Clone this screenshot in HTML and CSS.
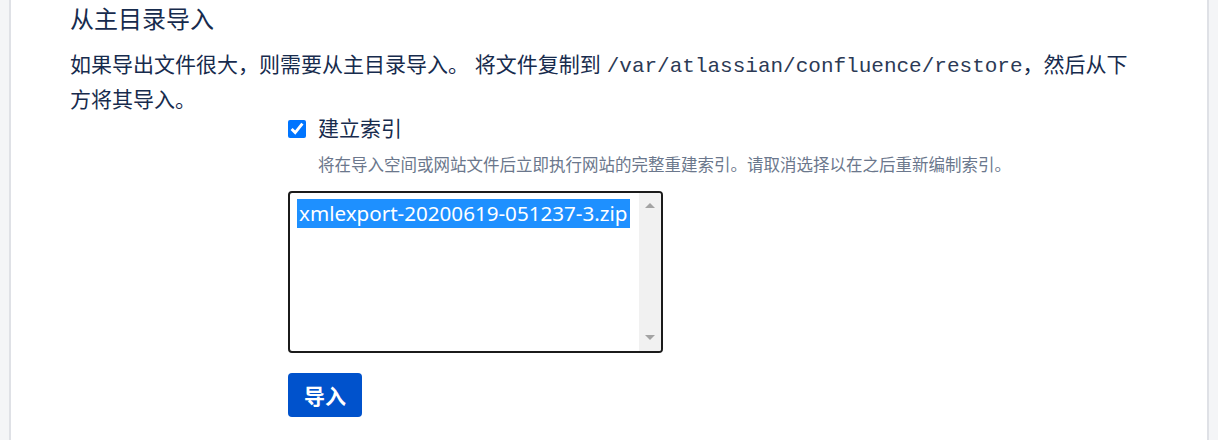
FILE: index.html
```html
<!DOCTYPE html>
<html lang="zh-CN">
<head>
    <meta charset="UTF-8">
    <title>从主目录导入</title>
    <link rel="stylesheet" href="styles.css">
</head>
<body>
    <div class="panel">
        <h2 class="title">从主目录导入</h2>
        <p class="desc">如果导出文件很大，则需要从主目录导入。 将文件复制到 <code>/var/atlassian/confluence/restore</code>，然后从下方将其导入。</p>

        <div class="form">
            <label class="check">
                <input type="checkbox" checked>
                <span>建立索引</span>
            </label>
            <div class="help">将在导入空间或网站文件后立即执行网站的完整重建索引。请取消选择以在之后重新编制索引。</div>

            <div class="listbox">
                <div class="options">
                    <div class="option selected">xmlexport-20200619-051237-3.zip</div>
                </div>
                <div class="scrollbar">
                    <span class="arrow up"></span>
                    <span class="arrow down"></span>
                </div>
            </div>

            <button class="btn">导入</button>
        </div>
    </div>
</body>
</html>
```

FILE: styles.css
```css
body {
    margin: 0;
    background: #f4f5f7;
    font-family: "Liberation Sans", "Noto Sans CJK SC", sans-serif;
    color: #172b4d;
}

.panel {
    margin: 0 9px;
    height: 440px;
    box-sizing: border-box;
    background: white;
    border-left: 2px solid #dfe1e6;
    border-right: 2px solid #dfe1e6;
    padding: 2px 75px 0 59px;
}

.title {
    margin: 0;
    font-size: 24px;
    font-weight: normal;
    line-height: 36px;
}

.desc {
    margin: 9px 0 2px;
    font-size: 21px;
    line-height: 35px;
}

.desc code {
    font-family: "Liberation Mono", monospace;
    font-size: 21px;
    line-height: 1;
    color: #2c3a55;
}

.form {
    padding-left: 218px;
}

.check {
    display: flex;
    align-items: center;
    gap: 12px;
    font-size: 21px;
    line-height: 20px;
}

.check input {
    margin: 0;
    width: 18px;
    height: 18px;
    accent-color: #0075ff;
}

.help {
    margin: 14px 0 0 30px;
    font-size: 16.5px;
    line-height: 24px;
    color: #6b778c;
}

.listbox {
    margin-top: 14px;
    width: 375px;
    height: 162px;
    box-sizing: border-box;
    border: 2px solid #1b1b1b;
    border-radius: 4px;
    display: flex;
    overflow: hidden;
}

.options {
    flex: 1;
    min-width: 0;
    padding: 6px 9px 0 7px;
}

.option {
    font-family: "Noto Sans", "Liberation Sans", sans-serif;
    font-size: 20.6px;
    line-height: 29px;
    padding-left: 2px;
    color: #000;
    white-space: nowrap;
    overflow: hidden;
}

.option.selected {
    background: #1e90ff;
    color: white;
}

.scrollbar {
    width: 22px;
    background: #f1f1f1;
    display: flex;
    flex-direction: column;
    justify-content: space-between;
    align-items: center;
    padding: 10px 0 11px;
}

.arrow {
    width: 0;
    height: 0;
    border-left: 5px solid transparent;
    border-right: 5px solid transparent;
}

.arrow.up {
    border-bottom: 5px solid #a3a3a3;
}

.arrow.down {
    border-top: 5px solid #a3a3a3;
}

.btn {
    margin-top: 20px;
    width: 74px;
    height: 44px;
    border: none;
    border-radius: 4px;
    background: #0052cc;
    color: white;
    font-family: "Noto Sans CJK SC", sans-serif;
    font-size: 21px;
    font-weight: bold;
    cursor: pointer;
}
```
